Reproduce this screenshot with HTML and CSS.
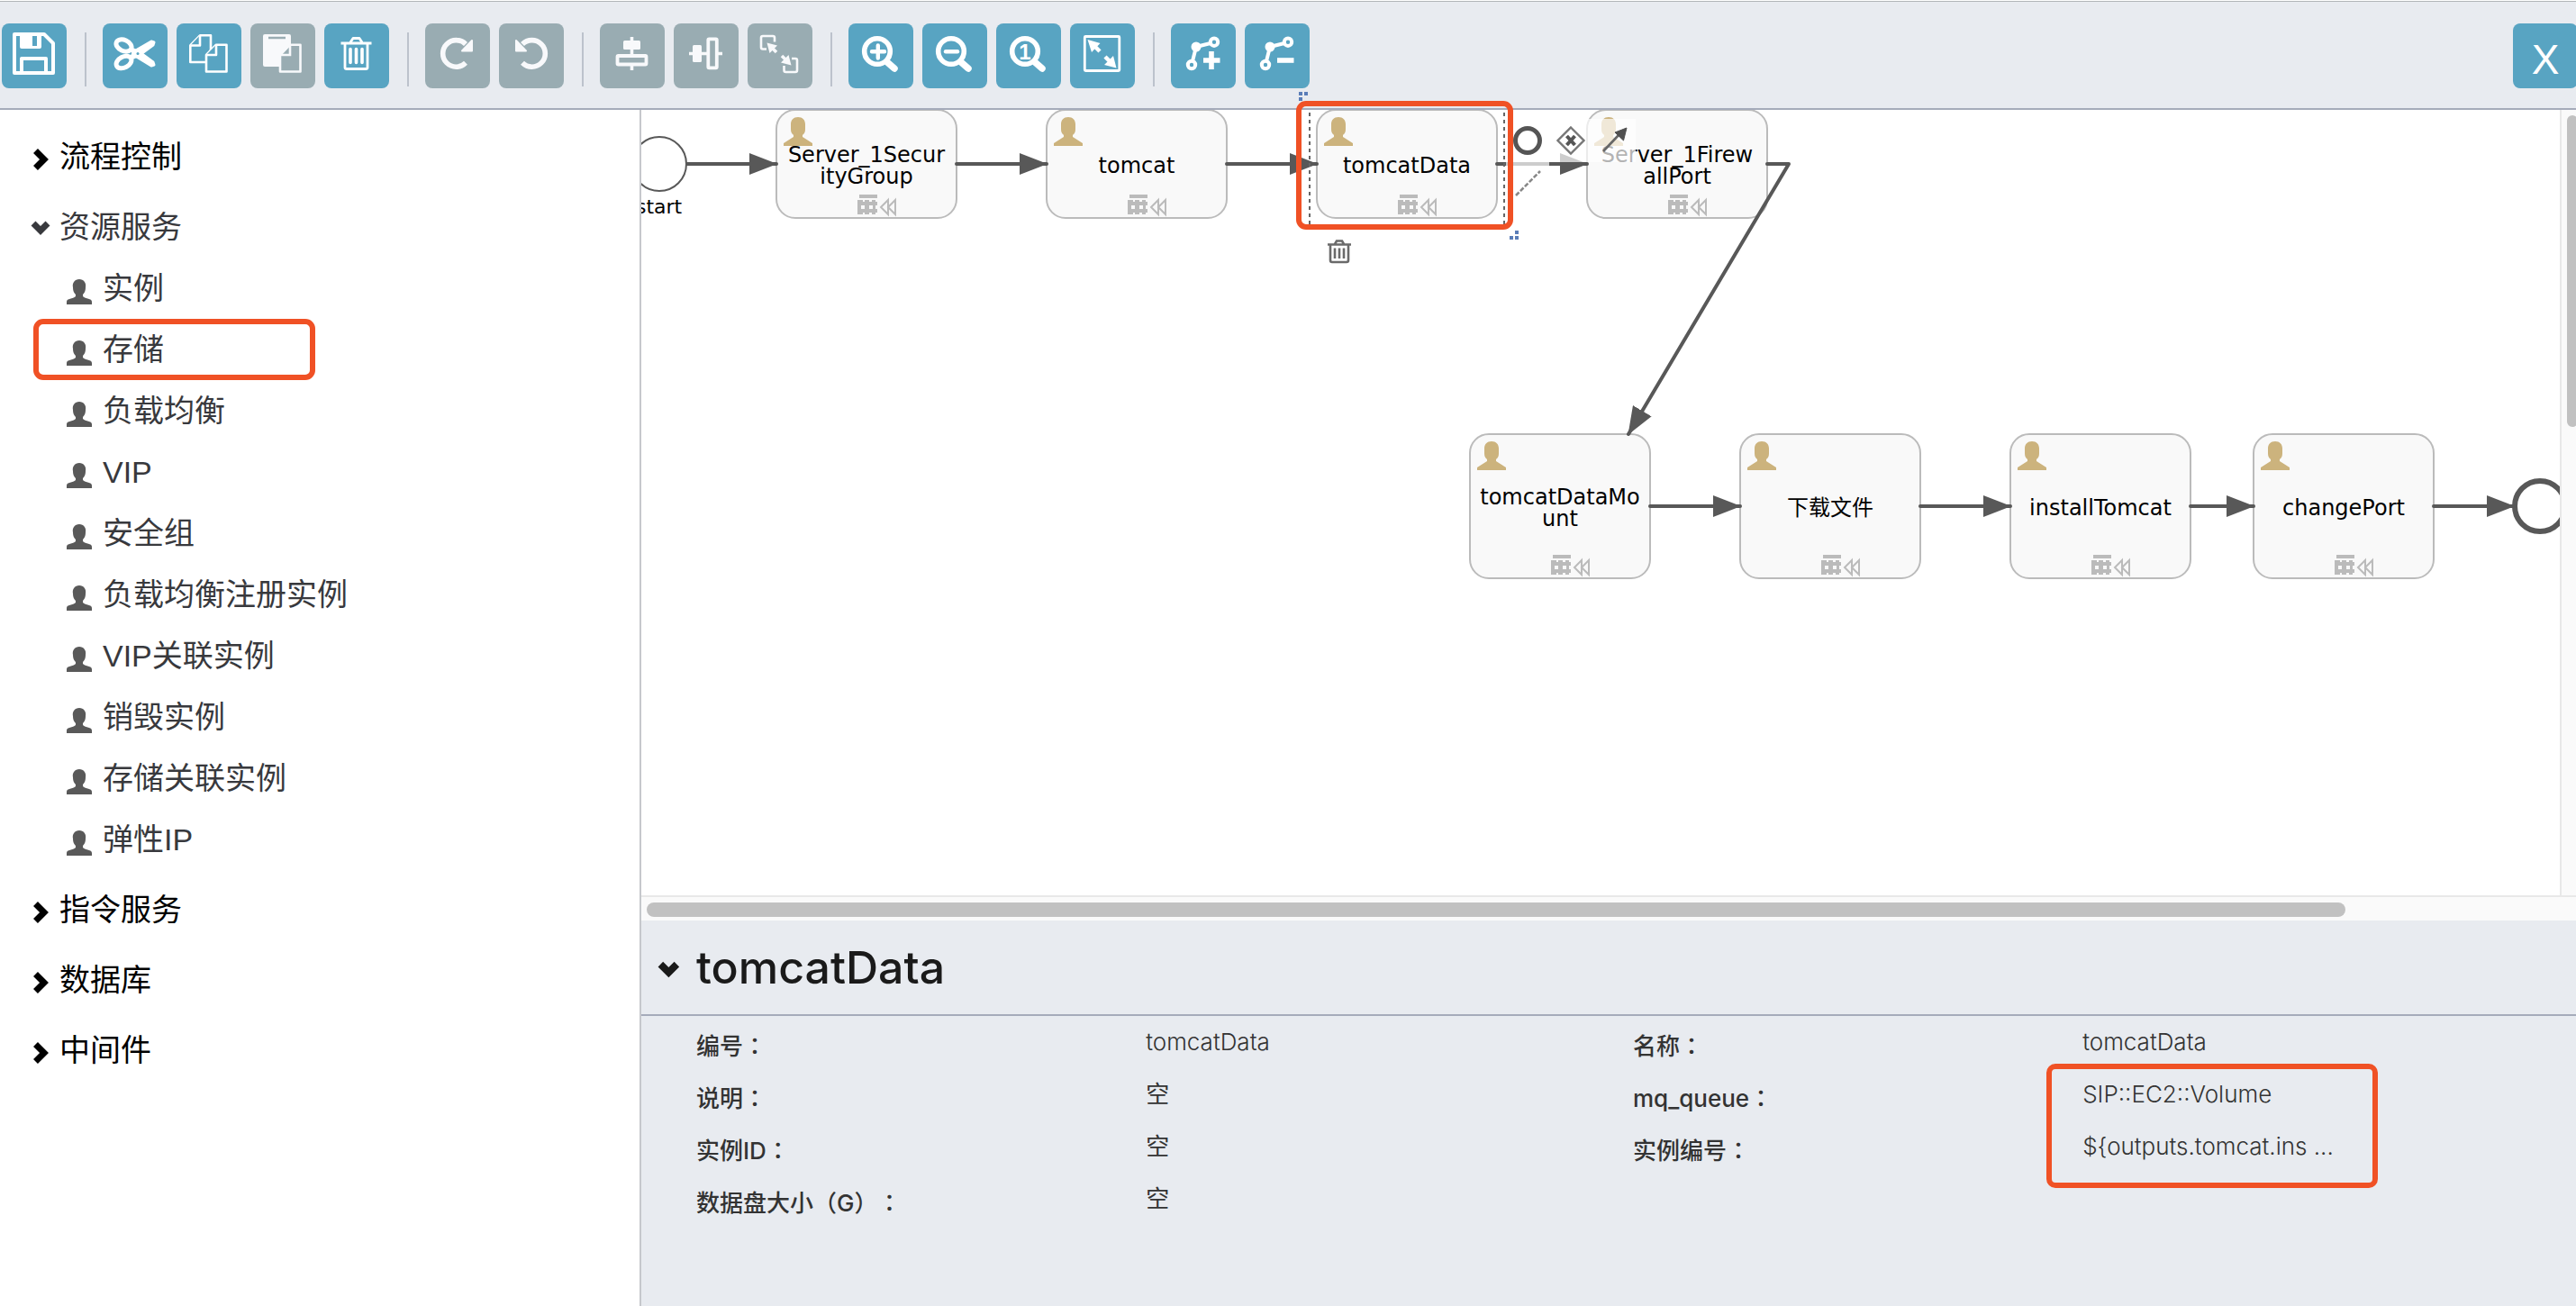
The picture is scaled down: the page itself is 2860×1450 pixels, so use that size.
FILE: index.html
```html
<!DOCTYPE html>
<html lang="zh-CN">
<head>
<meta charset="utf-8">
<title>流程设计器</title>
<link rel="stylesheet" href="styles.css">
</head>
<body>
<svg class="defs" aria-hidden="true">
  <symbol id="i-user" viewBox="0 0 32 32"><path d="M16 0C21 0 24 3 24 8V13C24 17 23 18 21 20V22L32 29V32H0V29L11 22V20C9 18 8 17 8 13V8C8 3 11 0 16 0Z"/></symbol>
  <symbol id="i-person" viewBox="0 0 28 28"><path d="M14 0C19 0 22 4 21 9C21 14 19 16 18 17V19C21 22 28 21 28 25V28H0V25C0 21 7 22 10 19V17C9 16 7 14 7 9C6 4 9 0 14 0Z"/></symbol>
  <symbol id="i-right" viewBox="0 0 24 24"><path d="M5.500 2.500L15 12L5.500 21.500" fill="none" stroke="currentColor" stroke-width="7"/></symbol>
  <symbol id="i-down" viewBox="0 0 24 24"><path d="M3 5L11 13L19 5" fill="none" stroke="currentColor" stroke-width="7"/></symbol>
  <symbol id="i-marks" viewBox="0 0 44 26">
    <path d="M2 0H22V4H2ZM0 8H22V12H0ZM0 16H22V20H0Z" /><path d="M0 6H6V22H0ZM8 6H13V22H8ZM16 6H20V22H16Z"/>
    <path d="M4 12h4v4H4zM13 12h4v4h-4z" fill="#f9f9f9"/>
    <path d="M34 6L26 14L34 22ZM42 6L34 14L42 22Z" fill="none" stroke="#bbb" stroke-width="2"/>
  </symbol>
  <symbol id="i-lens" viewBox="0 0 72 72"><circle cx="32" cy="31" r="14.3" fill="none" stroke="#fff" stroke-width="5.6"/><path d="M43 43L51 50" stroke="#fff" stroke-width="7.5" stroke-linecap="round"/></symbol>
  <symbol id="i-bend" viewBox="0 0 72 72"><g fill="none" stroke="#fff" stroke-width="4"><circle cx="48" cy="20.700" r="4.200"/><circle cx="23" cy="46" r="4.200"/><path d="M44 22L28 26L24 42"/></g><circle cx="28" cy="26" r="5.500" fill="#fff"/></symbol>
</svg>

<header class="toolbar">
  <button class="tool" aria-label="保存"><svg viewBox="0 0 72 72"><path d="M14 12H47L57 22V55H14Z" fill="none" stroke="#fff" stroke-width="4" stroke-linejoin="round"/><path fill-rule="evenodd" fill="#fff" d="M20 11H44V26Q44 28 42 28H22Q20 28 20 26ZM34 14V25H39V14Z"/><path d="M22 55V39H49V55" fill="none" stroke="#fff" stroke-width="4" stroke-linejoin="round"/></svg></button>
  <span class="sep"></span>
  <button class="tool" aria-label="剪切"><svg viewBox="0 0 72 72"><g fill="none" stroke="#fff" stroke-width="5"><ellipse cx="23.500" cy="24.500" rx="9" ry="6" transform="rotate(25 23.500 24.500)"/><ellipse cx="23.500" cy="43" rx="9" ry="6" transform="rotate(-28 23.500 43)"/></g><g fill="#fff" stroke="#fff" stroke-width="3" stroke-linejoin="round"><path d="M31 39L35 31L54 20L57 21L56 24L41 35L34 38Z"/><path d="M31 28L36 36L54 47L57 46L56 43L41 32L34 29Z"/></g><circle cx="39" cy="33.500" r="1.500" fill="#58a4c2"/></svg></button>
  <button class="tool" aria-label="复制"><svg viewBox="0 0 72 72"><g fill="#58a4c2" stroke="#fff" stroke-width="2.600" stroke-linejoin="round"><path d="M15.300 24.500L26 13.300H38V43H15.300Z"/><path d="M15.300 24.500H26V13.300" /><path d="M33 35L44 23.700H55.500V53.500H33Z"/><path d="M33 35H44V23.700"/></g></svg></button>
  <button class="tool tool-off" aria-label="粘贴"><svg viewBox="0 0 72 72"><path d="M16 12H43Q45 12 45 14V48H16Q14 48 14 46V14Q14 12 16 12Z" fill="#f8f9fb"/><path d="M20 16H39" stroke="#99acb2" stroke-width="2.500"/><path d="M33 35L44 23.700H55.500V53.500H33Z" fill="#99acb2" stroke="#f8f9fb" stroke-width="2.600" stroke-linejoin="round"/><path d="M33 35H44V23.700" fill="none" stroke="#f8f9fb" stroke-width="2.600"/></svg></button>
  <button class="tool" aria-label="删除"><svg viewBox="0 0 72 72"><g fill="none" stroke="#fff" stroke-width="2.800" stroke-linejoin="round"><path d="M18.500 22H52.500M29 21L32 16.500H39L42 21M23 22V49Q23 50.500 25 50.500H46Q48 50.500 48 49V22"/></g><path d="M29 28.500V43.500M35.500 28.500V43.500M42 28.500V43.500" stroke="#fff" stroke-width="3.600" stroke-linecap="round"/></svg></button>
  <span class="sep"></span>
  <button class="tool tool-off" aria-label="重做"><svg viewBox="0 0 72 72"><path d="M45 43.800A14.800 14.800 0 1 1 45 23" fill="none" stroke="#f8f9fb" stroke-width="5.600"/><path d="M41 30.500L52 19V30.500Z" fill="#f8f9fb" stroke="#f8f9fb" stroke-width="2" stroke-linejoin="round"/></svg></button>
  <button class="tool tool-off" aria-label="撤销"><svg viewBox="0 0 72 72"><g transform="translate(71 0) scale(-1 1)"><path d="M45 43.800A14.800 14.800 0 1 1 45 23" fill="none" stroke="#f8f9fb" stroke-width="5.600"/><path d="M41 30.500L52 19V30.500Z" fill="#f8f9fb" stroke="#f8f9fb" stroke-width="2" stroke-linejoin="round"/></g></svg></button>
  <span class="sep"></span>
  <button class="tool tool-off" aria-label="垂直对齐"><svg viewBox="0 0 72 72"><path d="M35.500 15V52" stroke="#f8f9fb" stroke-width="3.600"/><rect x="26" y="19" width="19" height="10" rx="1.500" fill="#f8f9fb"/><rect x="19.500" y="36" width="32" height="9.500" rx="1" fill="#99acb2" stroke="#f8f9fb" stroke-width="3.800"/></svg></button>
  <button class="tool tool-off" aria-label="水平对齐"><svg viewBox="0 0 72 72"><path d="M17 33.500H54" stroke="#f8f9fb" stroke-width="3.600"/><rect x="21" y="24" width="10" height="19" rx="1.500" fill="#f8f9fb"/><rect x="38.300" y="17.300" width="9.500" height="32" rx="1" fill="#99acb2" stroke="#f8f9fb" stroke-width="3.800"/></svg></button>
  <button class="tool tool-off" aria-label="相同大小"><svg viewBox="0 0 72 72"><g fill="none" stroke="#f8f9fb" stroke-width="2.600"><path d="M21 28.500H17Q15 28.500 15 26.500V16Q15 14 17 14H28Q30 14 30 16V20.500"/><path d="M49 39H53Q55 39 55 41V52Q55 54 53 54H42.500Q40.500 54 40.500 52V47"/><path d="M26 26L32 32M38 36L44 42" stroke-width="3.600"/></g><path d="M21.500 21.500L33 24.500L24.500 33Z M48.500 46.500L45.500 35L37 43.500Z" fill="#f8f9fb"/></svg></button>
  <span class="sep"></span>
  <button class="tool" aria-label="放大"><svg viewBox="0 0 72 72"><use href="#i-lens"/><path d="M26 31.300H40M32.800 24.500V38.500" stroke="#fff" stroke-width="4.400" stroke-linecap="round"/></svg></button>
  <button class="tool" aria-label="缩小"><svg viewBox="0 0 72 72"><use href="#i-lens"/><path d="M26 31.300H39" stroke="#fff" stroke-width="4.400" stroke-linecap="round"/></svg></button>
  <button class="tool" aria-label="实际大小"><svg viewBox="0 0 72 72"><use href="#i-lens"/><text class="lens-one" x="32" y="40" text-anchor="middle">1</text></svg></button>
  <button class="tool" aria-label="适合窗口"><svg viewBox="0 0 72 72"><rect x="16.300" y="14.500" width="38.500" height="38" rx="1" fill="none" stroke="#fff" stroke-width="2.800"/><path d="M25 23L33 31M39 37L46 44" stroke="#fff" stroke-width="4.500"/><path d="M19.500 18L33.500 22L24 32Z M51.500 49.500L48 36L38 46Z" fill="#fff"/></svg></button>
  <span class="sep"></span>
  <button class="tool" aria-label="添加折点"><svg viewBox="0 0 72 72"><use href="#i-bend"/><path d="M36 41H54.500M45 31V51" stroke="#fff" stroke-width="5.600"/></svg></button>
  <button class="tool" aria-label="删除折点"><svg viewBox="0 0 72 72"><use href="#i-bend"/><path d="M36 41H54.500" stroke="#fff" stroke-width="5.600"/></svg></button>
  <button class="tool tool-close" aria-label="关闭">X</button>
</header>

<div class="layout">
  <nav class="sidebar">
    <ul class="groups">
      <li class="group"><button class="group-head"><svg><use href="#i-right"/></svg>流程控制</button></li>
      <li class="group"><button class="group-head group-open" aria-expanded="true"><svg><use href="#i-down"/></svg>资源服务</button>
        <ul class="items">
          <li><a class="item" href="#"><svg><use href="#i-person"/></svg>实例</a></li>
          <li class="marked"><a class="item" href="#"><svg><use href="#i-person"/></svg>存储</a></li>
          <li><a class="item" href="#"><svg><use href="#i-person"/></svg>负载均衡</a></li>
          <li><a class="item" href="#"><svg><use href="#i-person"/></svg>VIP</a></li>
          <li><a class="item" href="#"><svg><use href="#i-person"/></svg>安全组</a></li>
          <li><a class="item" href="#"><svg><use href="#i-person"/></svg>负载均衡注册实例</a></li>
          <li><a class="item" href="#"><svg><use href="#i-person"/></svg>VIP关联实例</a></li>
          <li><a class="item" href="#"><svg><use href="#i-person"/></svg>销毁实例</a></li>
          <li><a class="item" href="#"><svg><use href="#i-person"/></svg>存储关联实例</a></li>
          <li><a class="item" href="#"><svg><use href="#i-person"/></svg>弹性IP</a></li>
        </ul>
      </li>
      <li class="group"><button class="group-head"><svg><use href="#i-right"/></svg>指令服务</button></li>
      <li class="group"><button class="group-head"><svg><use href="#i-right"/></svg>数据库</button></li>
      <li class="group"><button class="group-head"><svg><use href="#i-right"/></svg>中间件</button></li>
    </ul>
  </nav>

  <main class="workspace">
    <section class="canvas-area">
      <div class="canvas">
        <div class="node n-security"><svg class="node-user"><use href="#i-user"/></svg>Server_1Secur<br>ityGroup<svg class="node-marks"><use href="#i-marks"/></svg></div>
        <div class="node n-tomcat"><svg class="node-user"><use href="#i-user"/></svg>tomcat<svg class="node-marks"><use href="#i-marks"/></svg></div>
        <div class="node n-data"><svg class="node-user"><use href="#i-user"/></svg>tomcatData<svg class="node-marks"><use href="#i-marks"/></svg></div>
        <div class="node n-firewall"><svg class="node-user"><use href="#i-user"/></svg>Server_1Firew<br>allPort<svg class="node-marks"><use href="#i-marks"/></svg></div>
        <div class="node node-tall n-mount"><svg class="node-user"><use href="#i-user"/></svg>tomcatDataMo<br>unt<svg class="node-marks"><use href="#i-marks"/></svg></div>
        <div class="node node-tall n-download"><svg class="node-user"><use href="#i-user"/></svg>下载文件<svg class="node-marks"><use href="#i-marks"/></svg></div>
        <div class="node node-tall n-install"><svg class="node-user"><use href="#i-user"/></svg>installTomcat<svg class="node-marks"><use href="#i-marks"/></svg></div>
        <div class="node node-tall n-port"><svg class="node-user"><use href="#i-user"/></svg>changePort<svg class="node-marks"><use href="#i-marks"/></svg></div>
        <span class="start-label">start</span>
        <svg class="edges" width="2130" height="560" viewBox="0 0 2130 560">
          <defs><marker id="arrow" markerUnits="userSpaceOnUse" markerWidth="32" markerHeight="24" refX="30" refY="12" orient="auto"><path d="M0 0L31 12L0 24Z" fill="#585858"/></marker></defs>
          <circle cx="20" cy="60" r="30" fill="#fff" stroke="#585858" stroke-width="2"/>
          <circle cx="2108" cy="440" r="28" fill="#fff" stroke="#585858" stroke-width="6"/>
          <g fill="none" stroke="#585858" stroke-width="4" stroke-linecap="round" stroke-linejoin="round">
            <path d="M51 60H150" marker-end="url(#arrow)"/>
            <path d="M350 60H450" marker-end="url(#arrow)"/>
            <path d="M650 60H750" marker-end="url(#arrow)"/>
            <path d="M950 60H1050" marker-end="url(#arrow)"/>
            <path d="M1250 60H1274L1096 360" marker-end="url(#arrow)"/>
            <path d="M1120 440H1220" marker-end="url(#arrow)"/>
            <path d="M1420 440H1520" marker-end="url(#arrow)"/>
            <path d="M1720 440H1790" marker-end="url(#arrow)"/>
            <path d="M1990 440H2079" marker-end="url(#arrow)"/>
          </g>
        </svg>
        <svg class="edges" width="2130" height="560" viewBox="0 0 2130 560">
          <path d="M742 3V130M958 3V130" stroke="#666" stroke-width="2" stroke-dasharray="4 4"/>
          <path d="M960 10H1104V58H1008V106H960Z" fill="#fff" fill-opacity=".7"/>
          <circle cx="984" cy="34" r="13.500" fill="#fff" stroke="#555" stroke-width="5"/>
          <path d="M1032 19.500L1046.500 34L1032 48.500L1017.500 34Z" fill="#fff" stroke="#777" stroke-width="2.400"/>
          <path d="M1027.500 29L1036.500 39M1036.500 29L1027.500 39" stroke="#555" stroke-width="4"/>
          <path d="M1068 46L1086 27" stroke="#666" stroke-width="2.600"/><path d="M1094 20L1090.500 34L1081 25Z" fill="#505050" stroke="#505050"/>
          <path d="M971 95L998 68" stroke="#888" stroke-width="2.600" stroke-dasharray="5 2"/>
          <g fill="none" stroke="#6a6a6a" stroke-width="2.600"><path d="M762 149.500H788M770 149L772 145.500H778L780 149M765 149.500V167Q765 169 767 169H783Q785 169 785 167V149.500M770 153.500V165M775 153.500V165M780 153.500V165"/></g>
        </svg>
      </div>
      <svg class="overlay" width="260" height="172" viewBox="0 0 260 172">
        <path d="M8 0h4v4h-4zM14 0h4v4h-4zM8 6h4v4h-4zM248 154h4v4h-4zM242 160h4v4h-4zM248 160h4v4h-4z" fill="#5a7db8"/>
        <rect x="8" y="13" width="235" height="137" rx="8" fill="none" stroke="#f05125" stroke-width="6"/>
      </svg>
      <div class="track-y"><div class="thumb-y"></div></div>
      <div class="track-x"><div class="thumb-x"></div></div>
    </section>

    <section class="panel">
      <h1 class="panel-title"><svg><use href="#i-down"/></svg>tomcatData</h1>
      <div class="props">
        <dl class="prop-list">
          <dt>编号<span class="colon" lang="zh-Hant">：</span></dt><dd>tomcatData</dd>
          <dt>说明<span class="colon" lang="zh-Hant">：</span></dt><dd class="empty">空</dd>
          <dt>实例ID<span class="colon" lang="zh-Hant">：</span></dt><dd class="empty">空</dd>
          <dt>数据盘大小（G）<span class="colon" lang="zh-Hant">：</span></dt><dd class="empty">空</dd>
        </dl>
        <dl class="prop-list prop-marked">
          <dt>名称<span class="colon" lang="zh-Hant">：</span></dt><dd>tomcatData</dd>
          <dt>mq_queue<span class="colon" lang="zh-Hant">：</span></dt><dd>SIP::EC2::Volume</dd>
          <dt>实例编号<span class="colon" lang="zh-Hant">：</span></dt><dd>${outputs.tomcat.ins ...</dd>
        </dl>
      </div>
    </section>
  </main>
</div>
</body>
</html>
```
FILE: styles.css
```css
*, *::before, *::after { box-sizing: border-box; }
body {
  margin: 0;
  min-height: 100vh;
  display: flex;
  flex-direction: column;
  overflow: hidden;
  background: #fff;
  color: #333;
  font-family: "Liberation Sans", "Noto Sans CJK SC", sans-serif;
}
button { font: inherit; border: 0; padding: 0; cursor: pointer; }
ul, dl, dd, h1 { margin: 0; padding: 0; list-style: none; }
.defs { position: absolute; width: 0; height: 0; }

/* Toolbar */
.toolbar {
  display: flex;
  gap: 10px;
  margin-top: 1px;
  padding: 24px 0 22px 2px;
  border-top: 1px solid #b2b6b8;
  border-bottom: 2px solid #a5abba;
  background: #e8ebf0;
}
.tool {
  flex: none;
  width: 72px;
  height: 72px;
  border-radius: 8px;
  background: #58a4c2;
}
.tool svg { display: block; width: 72px; height: 72px; }
.tool-off { background: #99acb2; }
.tool-close {
  margin-left: auto;
  margin-right: -2px;
  padding-top: 8px;
  color: #fff;
  font-size: 46px;
  line-height: 60px;
}
.sep { flex: none; width: 2px; height: 60px; margin: 10px 8px 0 10px; background: #bcc2cc; }
.lens-one { font: bold 24px "Liberation Sans", sans-serif; fill: #fff; }

.layout { flex: 1; display: flex; }

/* Sidebar */
.sidebar { flex: none; width: 710px; padding-top: 18px; font-size: 34px; line-height: 68px; }
.group { margin-bottom: 10px; }
.group-head {
  display: flex;
  align-items: center;
  gap: 8px;
  width: 100%;
  height: 68px;
  padding-left: 34px;
  background: none;
  color: #000;
  text-align: left;
}
.group-head svg { width: 24px; height: 24px; margin-top: 6px; }
.group-open { color: #38393d; }
.item {
  display: flex;
  align-items: center;
  gap: 12px;
  height: 68px;
  padding-left: 74px;
  color: #38393d;
  text-decoration: none;
}
.item svg { width: 28px; height: 28px; margin-top: 8px; fill: #595959; }
.marked { position: relative; }
.marked::after {
  content: "";
  position: absolute;
  inset: 0 auto 0 37px;
  width: 313px;
  border: 6px solid #f05125;
  border-radius: 11px;
}

/* Canvas */
.workspace { flex: 1; min-width: 0; display: flex; flex-direction: column; border-left: 2px solid #c6c8cc; }
.canvas-area {
  position: relative;
  flex: 1;
  display: grid;
  grid-template-columns: minmax(0, 1fr) 18px;
  grid-template-rows: minmax(560px, 1fr) 28px;
}
.canvas { position: relative; overflow: hidden; }
.edges { position: absolute; left: 0; top: 0; }
.overlay { position: absolute; left: 722px; top: -20px; overflow: visible; }
.track-y { border-left: 2px solid #e8e8e8; background: #fafafa; padding: 6px 0 0 6px; }
.thumb-y { width: 12px; height: 40%; border-radius: 8px; background: #c1c1c1; }
.track-y, .track-x { overflow: hidden; }
.track-x { grid-column: 1 / 3; border-top: 2px solid #e8e8e8; background: #fafafa; padding: 6px; }
.thumb-x { width: 1886px; max-width: 100%; height: 16px; border-radius: 8px; background: #c1c1c1; }

.node {
  position: absolute;
  top: -1px;
  width: 202px;
  height: 122px;
  padding-top: 4px;
  display: flex;
  align-items: center;
  justify-content: center;
  flex-wrap: wrap;
  align-content: center;
  border: 2px solid #bbb;
  border-radius: 22px;
  background: #f9f9f9;
  color: #000;
  font: 24px/24px "DejaVu Sans", "Noto Sans CJK SC", sans-serif;
  text-align: center;
}
.node-tall { top: 359px; height: 162px; }
.node-user { position: absolute; left: 7px; top: 7px; width: 32px; height: 32px; fill: #ccb37d; }
.node-marks { position: absolute; left: 89px; bottom: -1px; width: 44px; height: 26px; fill: #bbb; }
.n-security { left: 149px; }
.n-tomcat { left: 449px; }
.n-data { left: 749px; }
.n-firewall { left: 1049px; }
.n-mount { left: 919px; }
.n-download { left: 1219px; }
.n-install { left: 1519px; }
.n-port { left: 1789px; }
.start-label { position: absolute; left: -6px; top: 96px; color: #000; font: 22px/24px "DejaVu Sans", sans-serif; }

/* Properties panel */
.panel { background: #e8ebf0; padding-bottom: 90px; font-family: Inter, "Noto Sans CJK SC", sans-serif; text-spacing-trim: space-all; }
.panel-title {
  display: flex;
  align-items: center;
  gap: 16px;
  height: 106px;
  padding-left: 18px;
  border-bottom: 2px solid #a5abba;
  color: #1a1a1a;
  font-size: 50px;
  font-weight: 500;
}
.panel-title svg { width: 27px; height: 27px; margin-top: 8px; }
.props { display: grid; grid-template-columns: 1fr 1fr; align-items: start; padding: 0 7px 0 61px; font-size: 26px; line-height: 58px; }
.prop-list { position: relative; display: grid; grid-template-columns: 12fr 13fr; }
.prop-list dt { padding-top: 5px; height: 58px; font-weight: 500; }
.prop-list dd { font-weight: 300; }
.prop-list .empty { font-weight: 400; }
.colon { font-family: "Noto Sans CJK TC", sans-serif; line-height: 1; }
.prop-marked::after {
  content: "";
  position: absolute;
  left: 459px;
  top: 53px;
  width: 368px;
  height: 138px;
  border: 6px solid #f05125;
  border-radius: 10px;
}
```
